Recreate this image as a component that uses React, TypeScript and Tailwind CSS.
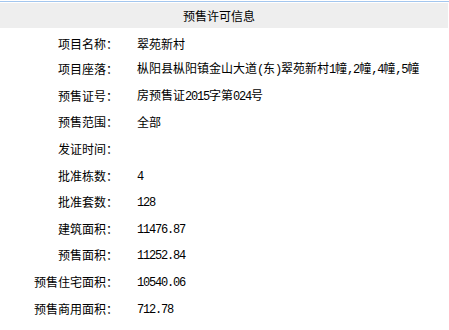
import React from "react";

type Row = { label: string; value: string };

const rows: Row[] = [
  { label: "项目名称：", value: "翠苑新村" },
  { label: "项目座落：", value: "枞阳县枞阳镇金山大道(东)翠苑新村1幢,2幢,4幢,5幢" },
  { label: "预售证号：", value: "房预售证2015字第024号" },
  { label: "预售范围：", value: "全部" },
  { label: "发证时间：", value: "" },
  { label: "批准栋数：", value: "4" },
  { label: "批准套数：", value: "128" },
  { label: "建筑面积：", value: "11476.87" },
  { label: "预售面积：", value: "11252.84" },
  { label: "预售住宅面积：", value: "10540.06" },
  { label: "预售商用面积：", value: "712.78" },
];

// ascii runs get a half-width mono face, like the old song-style page
const runs = (s: string) =>
  s
    .split(/([\x00-\x7f]+)/)
    .filter(Boolean)
    .map((p, i) =>
      /^[\x00-\x7f]+$/.test(p) ? (
        <span key={i} className="font-['Liberation_Mono',monospace] tracking-[-1.2px]">
          {p}
        </span>
      ) : (
        <span key={i}>{p}</span>
      )
    );

export default function App() {
  return (
    <div className="w-[449px] h-[330px] bg-white text-black text-[12px] leading-[12px] font-['Noto_Sans_CJK_SC',sans-serif] overflow-hidden">
      <div className="mt-[1px] border-t border-[#a3c6ee]">
        <div className="mt-[1px] mr-[1px] h-[25px] bg-[#eeeeee] flex items-center justify-center pr-[10px]">
          预售许可信息
        </div>
      </div>
      <div className="pt-[4px]">
        {rows.map((r, i) => (
          <div
            key={r.label}
            className={`grid grid-cols-[118px_1fr] items-center ${i === 0 ? "h-[24px]" : "h-[26.6px]"}`}
          >
            <div className="text-right whitespace-nowrap">{r.label}</div>
            <div className="pl-[19px] whitespace-nowrap">{runs(r.value)}</div>
          </div>
        ))}
      </div>
    </div>
  );
}
